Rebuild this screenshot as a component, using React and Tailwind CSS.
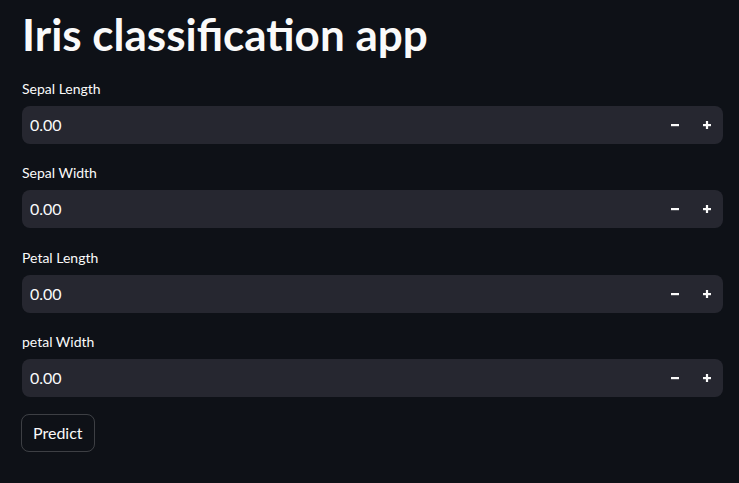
import React, { useState } from 'react';

const fields = ['Sepal Length', 'Sepal Width', 'Petal Length', 'petal Width'];

function NumberInput({ label }) {
  const [value, setValue] = useState(0);

  return (
    <div className="flex flex-col">
      <label className="text-[14px] leading-[21px] text-[#fafafa] mb-[7px]">{label}</label>
      <div className="flex h-[38px] items-center rounded-[8px] bg-[#262730]">
        <input
          className="flex-1 bg-transparent pl-[8px] text-[16px] text-[#fafafa] outline-none"
          value={value.toFixed(2)}
          readOnly
        />
        <button
          className="flex h-full w-[32px] items-center justify-center"
          onClick={() => setValue(v => v - 0.01)}
        >
          <svg width="8" height="8" viewBox="0 0 8 8">
            <rect x="0" y="3" width="8" height="2.2" fill="#fafafa" />
          </svg>
        </button>
        <button
          className="flex h-full w-[32px] items-center justify-center"
          onClick={() => setValue(v => v + 0.01)}
        >
          <svg width="8" height="8" viewBox="0 0 8 8">
            <rect x="0" y="3" width="8" height="2.2" fill="#fafafa" />
            <rect x="2.9" y="0" width="2.2" height="8" fill="#fafafa" />
          </svg>
        </button>
      </div>
    </div>
  );
}

export default function App() {
  return (
    <div
      className="min-h-screen bg-[#0e1117] text-[#fafafa] px-[22px] pt-[8px]"
      style={{ fontFamily: '"Source Sans Pro", Lato, sans-serif' }}
    >
      <h1 className="text-[44px] font-bold leading-[53px] mb-[17px]">Iris classification app</h1>
      <div className="flex w-[701px] flex-col gap-[18.4px]">
        {fields.map(f => (
          <NumberInput key={f} label={f} />
        ))}
      </div>
      <button className="-ml-[1px] mt-[17px] h-[38px] rounded-[8px] border border-[#fafafa33] px-[11px] text-[16px] text-[#fafafa]">
        Predict
      </button>
    </div>
  );
}
